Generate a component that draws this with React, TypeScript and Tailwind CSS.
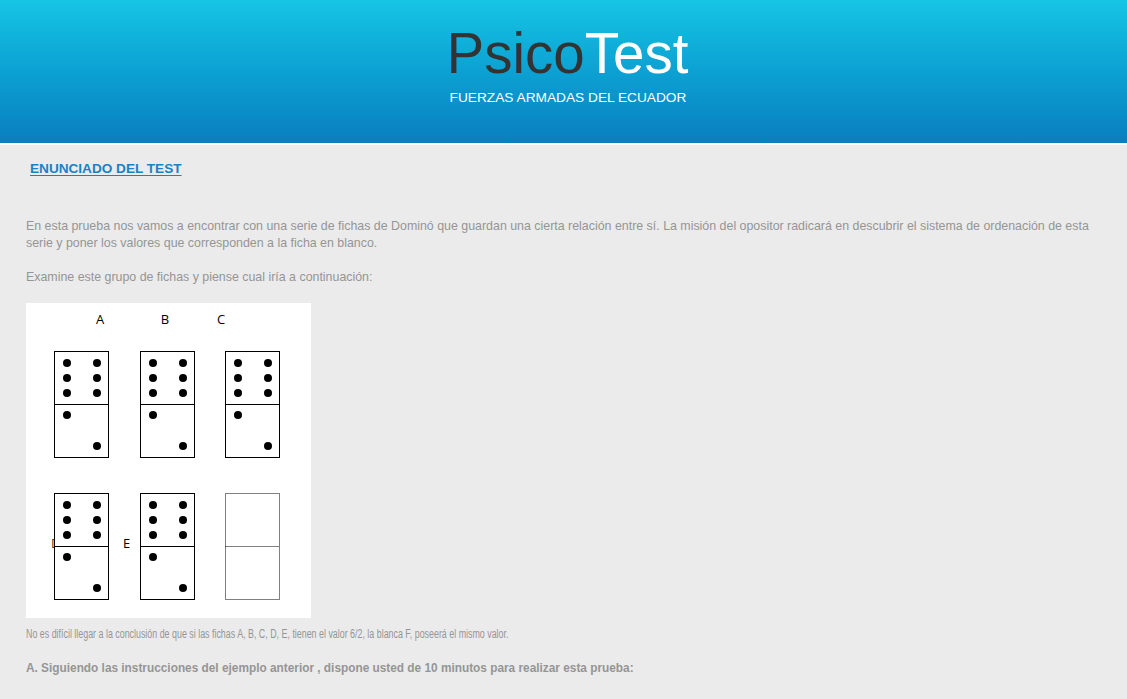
import React from 'react'

const Domino = ({ x, y, blank }: { x: number; y: number; blank?: boolean }) => {
    const dots = blank
        ? []
        : [
              [13, 12], [43, 12],
              [13, 27], [43, 27],
              [13, 42], [43, 42],
              [13, 64], [43, 95],
          ]
    const stroke = 'black'
    const dash = blank ? '1 1' : undefined
    return (
        <g transform={`translate(${x} ${y})`}>
            <rect x={0.5} y={0.5} width={54} height={106} fill='white' stroke={stroke} strokeWidth={1} strokeDasharray={dash} />
            <line x1={0.5} y1={53.5} x2={54.5} y2={53.5} stroke={stroke} strokeWidth={1} strokeDasharray={dash} />
            {dots.map(([cx, cy], i) => (
                <circle key={i} cx={cx} cy={cy} r={4} fill='black' />
            ))}
        </g>
    )
}

const DominoFigure = () => {
    return (
        <svg width={285} height={315} viewBox='0 0 285 315' className='block bg-white'>
            <g fontFamily='"Open Sans", "DejaVu Sans", sans-serif' fontSize={13} fill='black'>
                <text x={74} y={21} textAnchor='middle'>A</text>
                <text x={139} y={21} textAnchor='middle'>B</text>
                <text x={195} y={21} textAnchor='middle'>C</text>
                <text x={25} y={245} fill='#5a3a10'>D</text>
                <text x={97} y={245}>E</text>
            </g>
            <Domino x={28} y={48} />
            <Domino x={114} y={48} />
            <Domino x={199} y={48} />
            <Domino x={28} y={190} />
            <Domino x={114} y={190} />
            <Domino x={199} y={190} blank />
        </svg>
    )
}

export default function App() {
    return (
        <div className='min-h-[699px] bg-[#ebebeb] font-["Liberation_Sans",Arial,sans-serif]'>
            {/* header */}
            <header className='h-[145px] border-b-2 border-b-white bg-gradient-to-b from-[#16c5e4] to-[#0a7ec0] flex flex-col items-center'>
                <h1 className='mt-[22px] pl-[8px] text-[56.5px] leading-[64px]'>
                    <span className='text-[#333333]'>Psico</span>
                    <span className='text-white'>Test</span>
                </h1>
                <p className='mt-[4px] pl-[9px] text-[13.7px] leading-[16px] text-white'>FUERZAS ARMADAS DEL ECUADOR</p>
            </header>

            <main className='pl-[26px] pr-[16px] pt-[15px] text-[12.4px] leading-[17px] text-[#959595]'>
                <a href='#' className='ml-[4px] block text-[13.6px] font-bold text-[#1a82c4] underline underline-offset-2'>
                    ENUNCIADO DEL TEST
                </a>

                <p className='mt-[41px]'>
                    En esta prueba nos vamos a encontrar con una serie de fichas de Dominó que guardan una cierta relación entre sí. La misión del opositor radicará en descubrir el sistema de ordenación de esta serie y poner los valores que corresponden a la ficha en blanco.
                </p>

                <p className='mt-[17px]'>Examine este grupo de fichas y piense cual iría a continuación:</p>

                <div className='mt-[17px]'>
                    <DominoFigure />
                </div>

                <p className='mt-[8px] whitespace-nowrap'>
                    <span className='inline-block origin-left scale-x-[0.71] text-[12.5px]'>
                        No es difícil llegar a la conclusión de que si las fichas A, B, C, D, E, tienen el valor 6/2, la blanca F, poseerá el mismo valor.
                    </span>
                </p>

                <p className='mt-[17px] whitespace-nowrap font-bold'>
                    <span className='inline-block origin-left scale-x-[0.955] text-[12.4px]'>
                        A. Siguiendo las instrucciones del ejemplo anterior , dispone usted de 10 minutos para realizar esta prueba:
                    </span>
                </p>
            </main>
        </div>
    )
}
